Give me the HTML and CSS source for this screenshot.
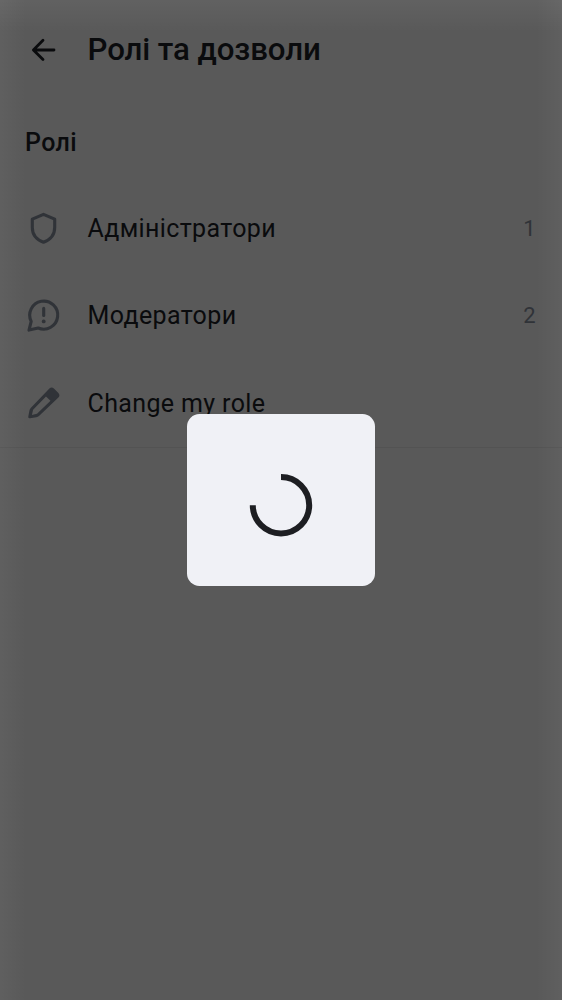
FILE: index.html
```html
<!DOCTYPE html>
<html lang="uk">
<head>
<meta charset="utf-8">
<title>Ролі та дозволи</title>
<link rel="stylesheet" href="styles.css">
</head>
<body>
<div class="screen">
  <header class="toolbar">
    <svg class="icon" viewBox="0 0 36 36"><path d="M29 18H9M18 8.3L8.4 18L18 27.6" stroke-width="2.8" stroke-linecap="round" stroke-linejoin="round"/></svg>
    <h1 class="title">Ролі та дозволи</h1>
  </header>
  <main class="content">
    <h2 class="section-title">Ролі</h2>
    <div class="row">
      <svg class="icon muted" viewBox="0 0 36 36"><path d="M18.5 4.4L29.7 9.2V17.5C29.7 24.5 25.4 29.7 18.5 32.2C11.6 29.7 7.3 24.5 7.3 17.5V9.2Z" stroke-width="3.1" stroke-linejoin="round"/></svg>
      <span class="label">Адміністратори</span><span class="count">1</span>
    </div>
    <div class="row">
      <svg class="icon muted" viewBox="0 0 36 36"><path d="M6.2 24.4A14 14 0 1 1 13.2 31L4 33.1Z" stroke-width="3.1" stroke-linejoin="round"/><path d="M18.7 11.4V18.5" stroke-width="3.1" stroke-linecap="round"/><circle class="solid" cx="18.7" cy="24.4" r="1.9"/></svg>
      <span class="label">Модератори</span><span class="count">2</span>
    </div>
    <div class="row">
      <svg class="icon muted" viewBox="0 0 36 36"><path class="solid" fill-rule="evenodd" d="M24.4 3.6Q26.6 1.5 28.9 3.6L33.4 8Q35.4 10.3 33.4 12.5L14 30.9Q12.8 31.9 11.3 32.2L5 33.3Q3 33.5 3.3 31.4L4.4 25.7Q4.7 24.2 5.7 23.1ZM21 11.4L8.1 24.7L6.9 30.1L12 28.7L25.5 15.8Z"/></svg>
      <span class="label">Change my role</span>
    </div>
  </main>
</div>
<div class="scrim">
  <div class="dialog">
    <svg class="spinner" viewBox="0 0 64 64"><path d="M32 4A28.2 28.2 0 1 1 3.8 32.2" stroke-width="6"/></svg>
  </div>
</div>
</body>
</html>
```
FILE: styles.css
```css
* { box-sizing: border-box; }
body {
  margin: 0;
  height: 1000px;
  overflow: hidden;
  background: #595959;
  color: #0a0b0d;
  font-family: Roboto, "Noto Sans", sans-serif;
}
.toolbar {
  display: flex;
  align-items: center;
  gap: 26.5px;
  height: 100px;
  padding: 0 25px;
}
.icon {
  flex: none;
  width: 36px;
  height: 36px;
  fill: none;
  stroke: #0a0b0d;
}
.muted { stroke: #303338; }
.solid { fill: #303338; stroke: none; }
.title {
  margin: 0;
  font-size: 31.25px;
  font-weight: 500;
  line-height: 40px;
  letter-spacing: -0.1px;
}
.section-title {
  margin: 0;
  height: 84px;
  padding: 1px 25px 0;
  font-size: 25px;
  font-weight: 500;
  line-height: 84px;
  letter-spacing: 0.4px;
}
.content {
  height: 348px;
  border-bottom: 1px solid #535353;
}
.row {
  display: flex;
  align-items: center;
  gap: 26.5px;
  height: 87.5px;
  padding: 0 26.5px 0 25px;
}
.label {
  flex: 1;
  padding-top: 1px;
  font-size: 25px;
  letter-spacing: 0.37px;
}
.count {
  padding-top: 1px;
  color: #303338;
  font-size: 22px;
}
.scrim {
  position: absolute;
  inset: 0;
  display: grid;
  place-items: center;
  background:
    linear-gradient(to bottom, rgb(255 255 255 / 5%), rgb(255 255 255 / 0%) 32px),
    linear-gradient(to right, rgb(255 255 255 / 4%), rgb(255 255 255 / 0%) 26px),
    linear-gradient(to left, rgb(255 255 255 / 4%), rgb(255 255 255 / 0%) 26px);
}
.dialog {
  display: flex;
  align-items: center;
  justify-content: center;
  width: 187.5px;
  height: 172px;
  padding-top: 9px;
  border-radius: 12.5px;
  background: #f0f1f6;
}
.spinner {
  width: 64px;
  height: 64px;
  fill: none;
  stroke: #1d1e22;
}
```
